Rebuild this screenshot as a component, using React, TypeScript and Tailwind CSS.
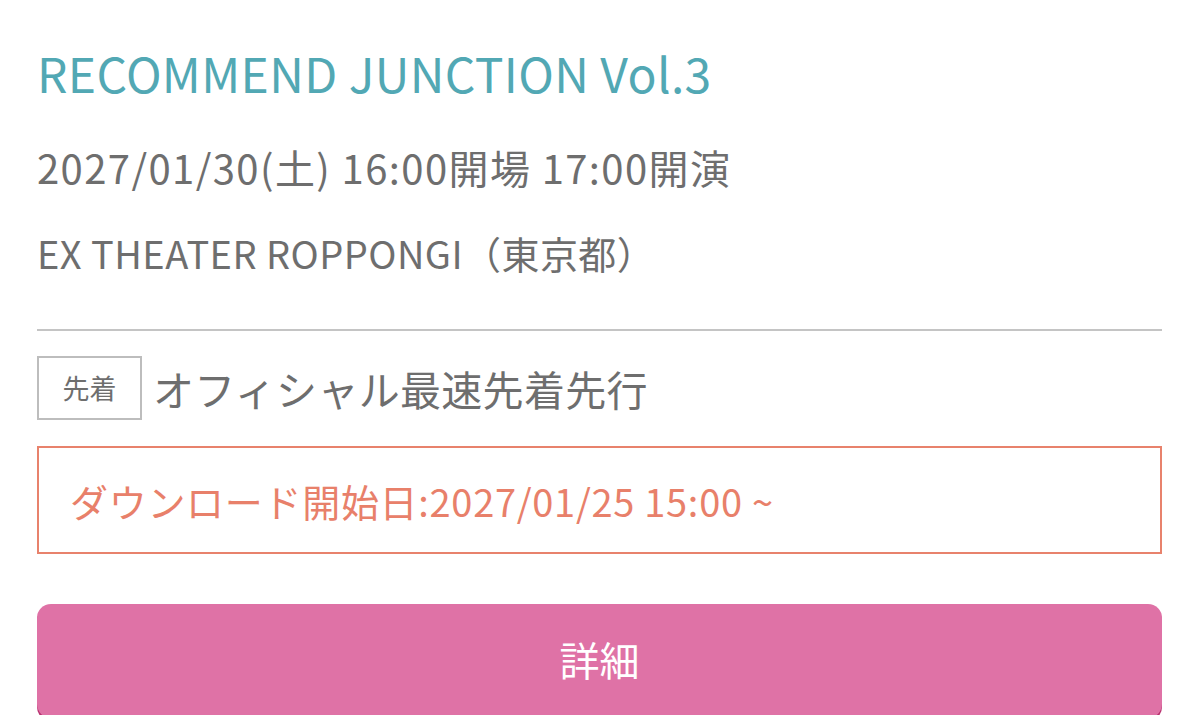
import React from "react";

export default function App() {
  return (
    <div
      className="w-[1199px] h-[715px] overflow-hidden bg-white px-[37px]"
      style={{ fontFamily: '"Noto Sans CJK JP", "Noto Sans", sans-serif' }}
    >
      <h1 className="pt-[48px] text-[48px] leading-[48px] tracking-[0.35px] text-[#52a8b4] font-normal">
        RECOMMEND JUNCTION Vol.3
      </h1>
      <p className="mt-[51px] text-[40px] leading-[40px] tracking-[1.4px] text-[#6e6e6e]">
        2027/01/30(土) 16:00開場 17:00開演
      </p>
      <p className="mt-[47px] text-[38px] leading-[38px] tracking-[0.45px] text-[#6e6e6e]">
        EX THEATER ROPPONGI（東京都）
      </p>
      <div className="mt-[57px] h-[2px] bg-[#c4c4c4]" />
      <div className="mt-[25px] flex items-center gap-[11px]">
        <div className="flex h-[64px] w-[105px] items-center justify-center border-2 border-[#bdbdbd] text-[27px] text-[#6e6e6e]">
          先着
        </div>
        <span className="text-[41px] leading-[41px] tracking-[0.3px] text-[#6e6e6e]">
          オフィシャル最速先着先行
        </span>
      </div>
      <div className="mt-[26px] flex h-[108px] items-center border-2 border-[#e8826c] pl-[31px] text-[38px] tracking-[0.7px] text-[#e8806a]">
        ダウンロード開始日:2027/01/25 15:00 ~
      </div>
      <div className="mt-[50px] flex h-[114px] items-center justify-center rounded-[14px] bg-[#df72a6] pb-[4px] text-[40px] text-white shadow-[0_3px_0_#b8316f]">
        詳細
      </div>
    </div>
  );
}
